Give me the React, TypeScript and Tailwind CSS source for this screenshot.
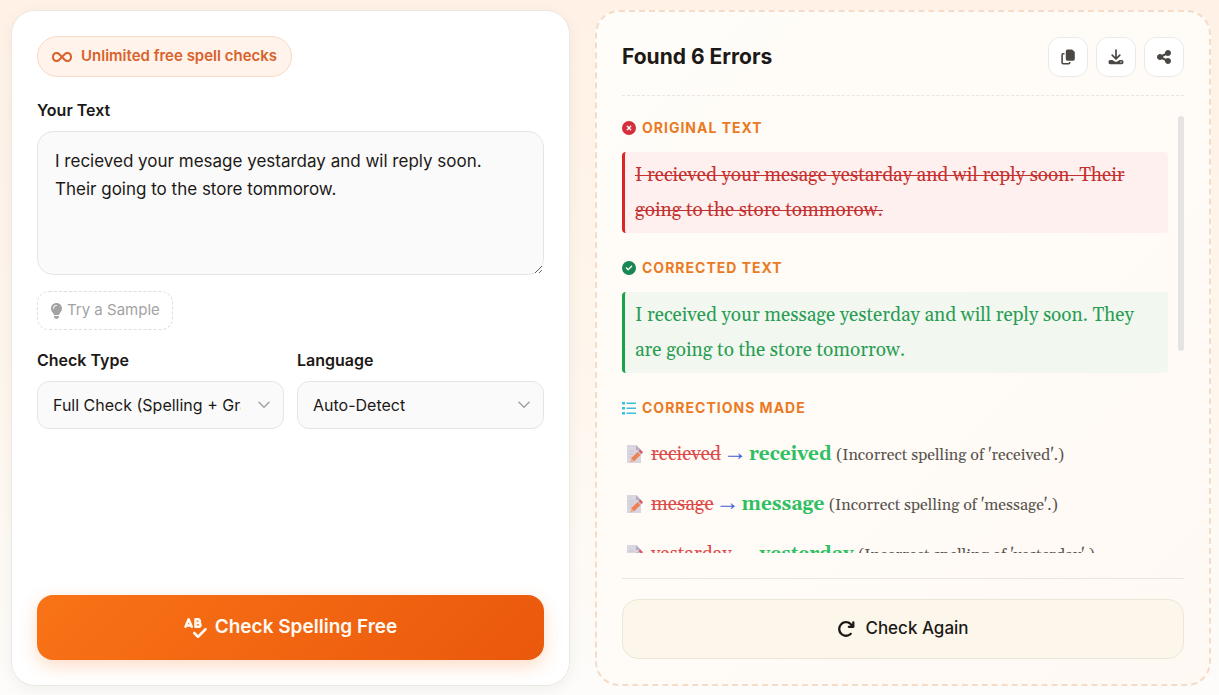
import { useEffect, useRef, useState } from "react";
import {
  FaArrowRotateRight,
  FaCircleCheck,
  FaCircleXmark,
  FaInfinity,
  FaLightbulb,
  FaShareNodes,
  FaSpellCheck,
} from "react-icons/fa6";

const SAMPLE =
  "I recieved your mesage yestarday and wil reply soon. Their going to the store tommorow.";

const SERIF = "font-[Georgia,Gelasio,'Liberation_Serif',serif]";

const corrections = [
  { wrong: "recieved", right: "received", note: "(Incorrect spelling of 'received'.)" },
  { wrong: "mesage", right: "message", note: "(Incorrect spelling of 'message'.)" },
  { wrong: "yestarday", right: "yesterday", note: "(Incorrect spelling of 'yesterday'.)" },
  { wrong: "wil", right: "will", note: "(Incorrect spelling of 'will'.)" },
  { wrong: "Their", right: "They are", note: "(Wrong word for 'They are'.)" },
  { wrong: "tommorow", right: "tomorrow", note: "(Incorrect spelling of 'tomorrow'.)" },
];

function CopyIcon() {
  return (
    <svg viewBox="0 0 16 16" className="h-4 w-4" fill="currentColor">
      <path d="M7.5 0.5h4.1a1.6 1.6 0 0 1 1.1.5l1.6 1.5a1.6 1.6 0 0 1 .5 1.2v6.3a1.7 1.7 0 0 1-1.7 1.7H7.5a1.7 1.7 0 0 1-1.7-1.7V2.2A1.7 1.7 0 0 1 7.5.5z" />
      <path
        d="M4.5 4.7H3.1a1 1 0 0 0-1 1v8a1 1 0 0 0 1 1h5.6a1 1 0 0 0 1-1v-.7"
        fill="none"
        stroke="currentColor"
        strokeWidth="1.6"
      />
    </svg>
  );
}

function DownloadIcon() {
  return (
    <svg viewBox="0 0 16 16" className="h-4 w-4" fill="none" stroke="currentColor">
      <path
        d="M8 1v8.5M4.2 6.2 8 10l3.8-3.8"
        strokeWidth="1.7"
        strokeLinecap="round"
        strokeLinejoin="round"
      />
      <path
        d="M2.2 11h2.2l2 1.2a2.6 2.6 0 0 0 3.2 0l2-1.2h2.2a1.7 1.7 0 0 1 1.7 1.7v.8a1.7 1.7 0 0 1-1.7 1.7H2.2a1.7 1.7 0 0 1-1.7-1.7v-.8a1.7 1.7 0 0 1 1.7-1.7z"
        fill="currentColor"
        stroke="none"
      />
      <circle cx="13" cy="13" r="0.7" fill="#fff" stroke="none" />
    </svg>
  );
}

function ListIcon() {
  return (
    <svg viewBox="0 0 14 14" className="h-3.5 w-3.5" fill="currentColor">
      <path d="M0 1h3v2.5H0zM0 6h3v2.5H0zM0 11h3v2.5H0z" />
      <path d="M4.5 1.4H14v1.7H4.5zM4.5 6.4H14v1.7H4.5zM4.5 11.4H14v1.7H4.5z" />
    </svg>
  );
}

function MemoIcon() {
  return (
    <svg viewBox="0 0 18 20" className="h-5 w-[18px] shrink-0">
      <path d="M1 1h9l5 5v13H1z" fill="#d9d6e0" />
      <path d="M10 1l5 5h-5z" fill="#b3aec2" />
      <path d="M3 7h5M3 10h5M3 13h3" stroke="#c8c4d2" />
      <path d="M4 18.5l1.2-4.3 3 3z" fill="#e8b48e" />
      <path d="M5.2 14.2l6.3-6.2 3 3-6.3 6.2z" fill="#ee8154" />
      <path d="M11.5 8l1-1 3 3-1 1z" fill="#b9c0cc" />
      <path d="M12.5 7l1-1q.7-.6 1.4 0l1.6 1.6q.6.7 0 1.4l-1 1z" fill="#e0576a" />
    </svg>
  );
}

function SelectField({ id, label, options }: { id: string; label: string; options: string[] }) {
  return (
    <div className="min-w-0">
      <label htmlFor={id} className="block text-base leading-6 font-semibold text-[#1c1917]">
        {label}
      </label>
      <div className="relative mt-[9px]">
        <select
          id={id}
          className="h-12 w-full appearance-none rounded-xl border border-[#e7e5e4] bg-[#fafafa] pr-[42px] pl-[15px] text-base text-[#1c1917]"
        >
          {options.map((option) => (
            <option key={option}>{option}</option>
          ))}
        </select>
        <svg
          viewBox="0 0 12 8"
          className="pointer-events-none absolute top-5 right-[14px] h-2 w-3"
          fill="none"
          stroke="#a3a3a3"
          strokeWidth="1.5"
          strokeLinecap="round"
          strokeLinejoin="round"
        >
          <path d="M1 1.2l5 5 5-5" />
        </svg>
      </div>
    </div>
  );
}

const iconButton =
  "flex size-10 items-center justify-center rounded-xl border border-[#eceae8] bg-white text-base text-[#4b4844]";

const sectionTitle =
  "flex items-center gap-[6px] text-sm leading-6 font-bold tracking-[1px] text-[#ea7a24] uppercase";

export default function App() {
  const [text, setText] = useState(SAMPLE);
  const resultsRef = useRef<HTMLDivElement>(null);
  const [thumb, setThumb] = useState({ height: 54, top: 0 });

  const updateThumb = () => {
    const el = resultsRef.current;
    if (!el) return;
    setThumb({
      height: (el.clientHeight / el.scrollHeight) * 100,
      top: (el.scrollTop / el.scrollHeight) * 100,
    });
  };

  useEffect(() => {
    updateThumb();
    window.addEventListener("resize", updateThumb);
    return () => window.removeEventListener("resize", updateThumb);
  }, []);

  return (
    <main className="grid min-h-screen gap-[25px] bg-linear-to-b from-[#fff1e6] via-[#fef6ec] to-[#fdfcfa] pt-[10px] pr-2 pb-[9px] pl-[11px] font-[Inter,sans-serif] text-[#1c1917] md:h-screen md:grid-cols-[559fr_616fr] md:grid-rows-[minmax(0,1fr)]">
      {/* Input card */}
      <section className="flex min-w-0 flex-col items-start rounded-3xl border border-[#ece8e4] bg-white p-[25px] shadow-[0_4px_16px_rgba(0,0,0,0.05)]">
        <div className="flex h-[41px] items-center gap-[9px] rounded-full border border-[#f8d9c5] bg-[#fff3eb] px-[14px] text-[15px] font-semibold text-[#d9622b]">
          <FaInfinity className="h-5 w-5" />
          <span>Unlimited free spell checks</span>
        </div>

        <label htmlFor="text" className="mt-[21px] text-base leading-6 font-semibold">
          Your Text
        </label>
        <textarea
          id="text"
          value={text}
          onChange={(e) => setText(e.target.value)}
          className="mt-[9px] h-36 w-full resize-y rounded-2xl border border-[#e7e5e4] bg-[#fafafa] px-[17px] py-[15px] text-[17px] leading-7"
        />
        <button
          type="button"
          onClick={() => setText(SAMPLE)}
          className="mt-4 flex h-[39px] items-center gap-1 rounded-xl border border-dashed border-[#e0dedc] px-3 text-[15px] text-[#a3a3a3]"
        >
          <FaLightbulb className="h-4 w-[13px]" />
          Try a Sample
        </button>

        <div className="mt-[18px] grid w-full grid-cols-2 gap-[13px]">
          <SelectField
            id="check-type"
            label="Check Type"
            options={["Full Check (Spelling + Grammar)", "Spelling Only", "Grammar Only"]}
          />
          <SelectField id="language" label="Language" options={["Auto-Detect", "English", "Spanish"]} />
        </div>

        <button
          type="button"
          className="mt-auto flex h-[65px] w-full items-center justify-center gap-2 rounded-2xl bg-linear-135 from-[#f97316] to-[#ea580c] text-[19px] font-semibold text-[#fffaf3] shadow-[0_6px_18px_rgba(249,115,22,0.25)]"
        >
          <FaSpellCheck className="h-5 w-[23px]" />
          Check Spelling Free
        </button>
      </section>

      {/* Results card */}
      <section className="flex min-w-0 flex-col rounded-3xl border-2 border-dashed border-[#f4dcc8] bg-linear-135 from-[#fffdf9] to-[#fff9f4] p-[25px]">
        <header className="flex items-center justify-between border-b border-dashed border-[#ebe5df] pb-[18px]">
          <h2 className="text-[21px] leading-7 font-bold">Found 6 Errors</h2>
          <div className="flex gap-2">
            <button type="button" aria-label="Copy" className={iconButton}>
              <CopyIcon />
            </button>
            <button type="button" aria-label="Download" className={iconButton}>
              <DownloadIcon />
            </button>
            <button type="button" aria-label="Share" className={iconButton}>
              <FaShareNodes />
            </button>
          </div>
        </header>

        <div className="mt-5 flex min-h-0 flex-1 gap-[10px]">
          <div
            ref={resultsRef}
            onScroll={updateThumb}
            className={`min-w-0 flex-1 overflow-y-auto [scrollbar-width:none] ${SERIF}`}
          >
            <h3 className={`font-[Inter,sans-serif] ${sectionTitle}`}>
              <FaCircleXmark className="text-[#d32f3f]" />
              Original Text
            </h3>
            <p className="mt-3 rounded-sm border-l-[3px] border-[#dc2626] bg-[#fdf0ee] px-[10px] pt-[6px] pb-[5px] text-[19px] leading-[35px] text-[#c53030] line-through decoration-1">
              I recieved your mesage yestarday and wil reply soon. Their going to the store tommorow.
            </p>

            <h3 className={`mt-[23px] font-[Inter,sans-serif] ${sectionTitle}`}>
              <FaCircleCheck className="text-[#198754]" />
              Corrected Text
            </h3>
            <p className="mt-3 rounded-sm border-l-[3px] border-[#16a34a] bg-[#f2f7ef] px-[10px] pt-[6px] pb-[5px] text-[19px] leading-[35px] text-[#2a9d55]">
              I received your message yesterday and will reply soon. They are going to the store tomorrow.
            </p>

            <h3 className={`mt-[23px] font-[Inter,sans-serif] ${sectionTitle}`}>
              <span className="text-[#3bbfdc]">
                <ListIcon />
              </span>
              Corrections Made
            </h3>
            <ul className="mt-[9px] pb-[200px]">
              {corrections.map((c) => (
                <li key={c.wrong} className="flex h-[50px] items-center gap-[7px] px-1">
                  <MemoIcon />
                  <span className="text-[19px] leading-[35px]">
                    <del className="text-[#dc4a4a] decoration-1">{c.wrong}</del>
                    <span className="px-0.5 font-['Liberation_Serif',serif] text-2xl leading-none text-[#4361d8]">
                      →
                    </span>
                    <strong className="font-bold text-[#2fbf63]">{c.right}</strong>{" "}
                    <span className="text-base text-[#57534e]">{c.note}</span>
                  </span>
                </li>
              ))}
            </ul>
          </div>
          <div className="w-[6px] shrink-0">
            <div
              className="relative w-full rounded-full bg-[#e5e4e2]"
              style={{ height: `${thumb.height}%`, top: `${thumb.top}%` }}
            />
          </div>
        </div>

        <footer className="mt-[25px] border-t border-[#ebe6e0] pt-5">
          <button
            type="button"
            className="flex h-[60px] w-full items-center justify-center gap-[10px] rounded-2xl border border-[#ede6d8] bg-[#fdf7eb] text-[17px] font-medium"
          >
            <FaArrowRotateRight className="h-[18px] w-[18px]" />
            Check Again
          </button>
        </footer>
      </section>
    </main>
  );
}
